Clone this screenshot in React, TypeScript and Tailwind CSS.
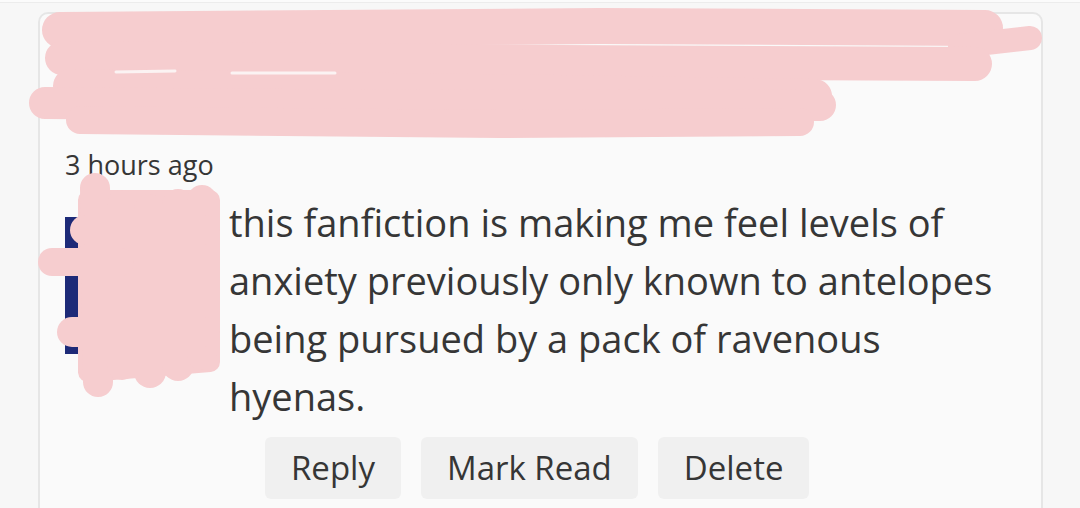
const lines = [
  "this fanfiction is making me feel levels of",
  "anxiety previously only known to antelopes",
  "being pursued by a pack of ravenous",
  "hyenas.",
];

const actions = ["Reply", "Mark Read", "Delete"];

// hand-drawn redaction over the post header and the avatar
function Scribble() {
  const pink = "#f6cdcf";
  return (
    <svg
      className="absolute inset-0 pointer-events-none"
      width={1080}
      height={508}
      viewBox="0 0 1080 508"
      fill="none"
      stroke={pink}
      strokeLinecap="round"
      strokeLinejoin="round"
    >
      {/* header */}
      <path d="M60 30 L600 26 L985 28" strokeWidth={36} />
      <path d="M960 46 L1030 38" strokeWidth={24} />
      <path d="M62 58 L560 62 L975 64" strokeWidth={34} />
      <path d="M70 86 L560 92 L815 96" strokeWidth={34} />
      <path d="M45 103 L430 106 L820 105" strokeWidth={32} />
      <path d="M80 120 L500 124 L800 122" strokeWidth={28} />
      <path d="M116 72 L175 71 M232 73 L335 73" stroke="#fbf3f3" strokeWidth={3} />
      {/* avatar */}
      <path d="M88 200 L210 200 L210 362 L88 372 Z" fill={pink} strokeWidth={20} />
      <path d="M95 188 L98 382" strokeWidth={30} />
      <path d="M122 205 L122 365" strokeWidth={30} />
      <path d="M150 210 L150 372" strokeWidth={32} />
      <path d="M178 205 L178 365" strokeWidth={32} />
      <path d="M202 200 L202 355" strokeWidth={30} />
      <path d="M52 262 L120 262" strokeWidth={28} />
      <path d="M72 332 L205 332" strokeWidth={30} />
      <path d="M85 230 L205 230" strokeWidth={30} />
    </svg>
  );
}

export default function App() {
  return (
    <div
      className="relative w-[1080px] h-[508px] overflow-hidden bg-[#f7f7f7] text-[#363636]"
      style={{ fontFamily: '"Open Sans", "Noto Sans", sans-serif' }}
    >
      <div className="h-[3px] border-b border-[#ececec] bg-[#fbfbfb]" />
      <div className="pt-[9px] pl-[38px] pr-[37px]">
        <div className="h-[520px] rounded-t-[10px] border-[2px] border-[#e6e6e6] bg-[#fafafa]">
          {/* header (username / post title) is redacted */}
          <div className="h-[133px]" />
          <div className="pl-[25px] text-[27px] leading-[36px]">3 hours ago</div>
          <div className="flex items-start pl-[25px] pt-[10px]">
            <div className="mt-[24px] w-[150px] h-[137px] shrink-0 bg-[#1d2a78]" />
            <div className="pl-[14px]">
              <p className="text-[38px] leading-[58px]">
                {lines.map((line, i) => (
                  <span key={i} className="block whitespace-nowrap">
                    {line}
                  </span>
                ))}
              </p>
              <div className="flex gap-[20px] pl-[36px] pt-[12px]">
                {actions.map((label) => (
                  <button
                    key={label}
                    className="h-[62px] px-[26px] rounded-[6px] bg-[#f0f0f0] text-[33px] text-[#363636]"
                  >
                    {label}
                  </button>
                ))}
              </div>
            </div>
          </div>
        </div>
      </div>
      <Scribble />
    </div>
  );
}
